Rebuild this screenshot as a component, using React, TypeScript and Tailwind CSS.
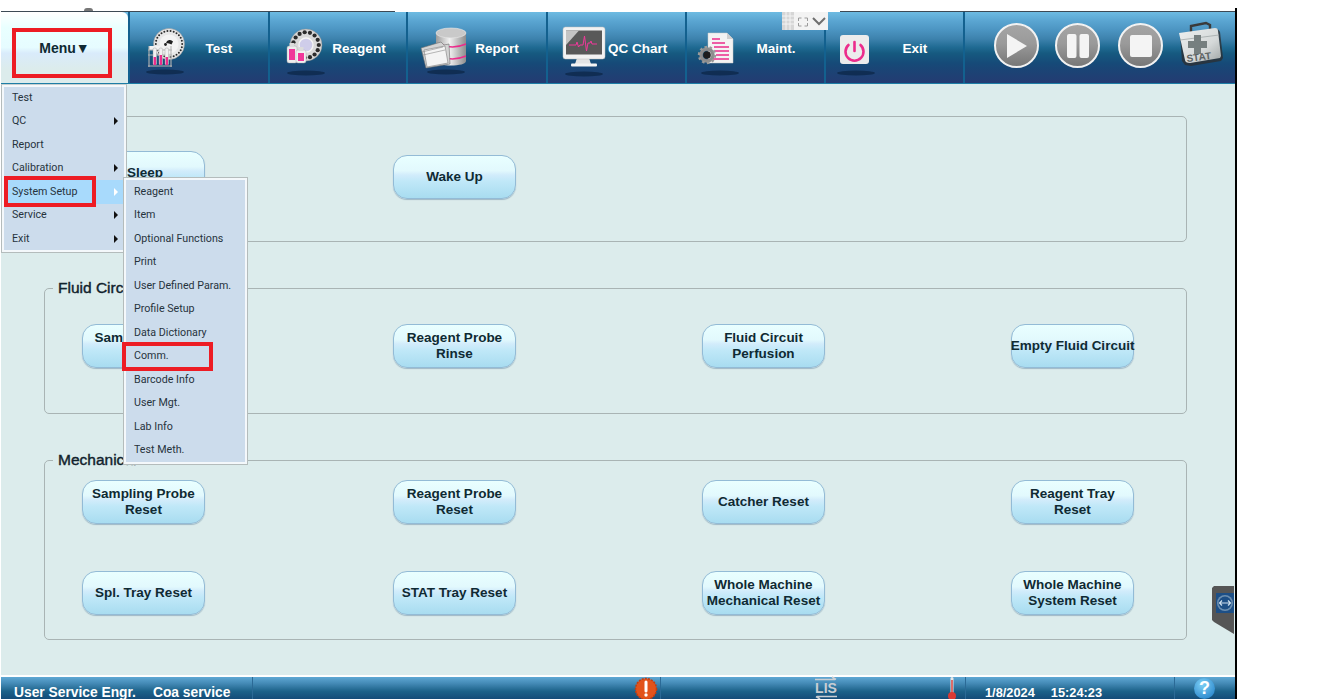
import { ReactNode } from 'react'

const shadow = (cx: number, cy = 60) => <ellipse cx={cx} cy={cy} rx="19" ry="2.5" fill="#0c2748" opacity="0.75" />

function Dots({ cx, cy, r, n, size }: { cx: number; cy: number; r: number; n: number; size: number }) {
  return (
    <>
      {Array.from({ length: n }).map((_, i) => (
        <circle
          key={i}
          cx={cx + r * Math.cos((i * 2 * Math.PI) / n)}
          cy={cy + r * Math.sin((i * 2 * Math.PI) / n)}
          r={size}
          fill="#2b2b2b"
        />
      ))}
    </>
  )
}

function TestIcon() {
  return (
    <svg className="-ml-[2px] shrink-0" width="62" height="72" viewBox="0 0 62 72">
      {shadow(37, 60)}
      <circle cx="41" cy="32" r="15.5" fill="#e8e8e8" stroke="#9a9a9a" strokeWidth="0.6" />
      <Dots cx={41} cy={32} r={13.2} n={26} size={1} />
      <circle cx="41" cy="32" r="9.5" fill="#f4f4f4" />
      <path d="M38 31a4 4 0 0 1 7-1.5l-1.5 3-2.5-1z" fill="#222" />
      <circle cx="37.5" cy="32.5" r="1.4" fill="#222" />
      <path d="M21 34h23l-1 4H21z" fill="#f2f2f2" />
      <g stroke="#b4b4b4" strokeWidth="1.1" fill="none">
        <path d="M20 38h24M20 43h24M20 54h24M21 34v21M43 34v21" />
      </g>
      <g>
        <rect x="25" y="36" width="3.6" height="17" rx="1.5" fill="#f1f1f1" stroke="#999" strokeWidth="0.4" />
        <rect x="31" y="36" width="3.6" height="17" rx="1.5" fill="#f1f1f1" stroke="#999" strokeWidth="0.4" />
        <rect x="37" y="36" width="3.6" height="17" rx="1.5" fill="#f1f1f1" stroke="#999" strokeWidth="0.4" />
        <rect x="25.6" y="45" width="2.4" height="8" fill="#ec2c8c" />
        <rect x="31.6" y="43" width="2.4" height="10" fill="#ec2c8c" />
        <rect x="37.6" y="45" width="2.4" height="8" fill="#ec2c8c" />
      </g>
    </svg>
  )
}

function ReagentIcon() {
  return (
    <svg className="-ml-[2px] shrink-0" width="62" height="72" viewBox="0 0 62 72">
      {shadow(38, 61)}
      <circle cx="38" cy="33" r="16" fill="#d9d9d9" stroke="#8d8d8d" strokeWidth="0.5" />
      <Dots cx={38} cy={33} r={12.8} n={15} size={2.1} />
      <circle cx="38" cy="33" r="7" fill="#cfcdea" stroke="#f5f5f5" strokeWidth="1.4" />
      <rect x="19" y="34" width="10" height="17" rx="2" fill="#ededed" stroke="#aaa" strokeWidth="0.4" />
      <rect x="21.5" y="31" width="5" height="4" fill="#dcdcdc" />
      <rect x="21" y="37" width="6" height="11" fill="#f0389a" />
      <rect x="28" y="38" width="10" height="13" rx="2" fill="#f0f0f0" stroke="#aaa" strokeWidth="0.4" />
      <rect x="30.5" y="35" width="5" height="4" fill="#dcdcdc" />
      <rect x="30" y="41" width="6" height="8" fill="#f0389a" />
    </svg>
  )
}

function ReportIcon() {
  return (
    <svg className="-ml-[2px] shrink-0" width="62" height="72" viewBox="0 0 62 72">
      <defs>
        <linearGradient id="cyl" x1="0" x2="1" y1="0" y2="0">
          <stop offset="0" stopColor="#9c9c9c" />
          <stop offset="0.45" stopColor="#f1f1f1" />
          <stop offset="1" stopColor="#8d8d8d" />
        </linearGradient>
      </defs>
      {shadow(40, 60)}
      <path d="M30 21v28c0 3 7 4.5 15 4.5s15-1.5 15-4.5V21z" fill="url(#cyl)" />
      <ellipse cx="45" cy="21" rx="15" ry="5" fill="#c9c9c9" stroke="#e9e9e9" strokeWidth="0.6" />
      <path d="M36 33c8 3 17 2 24-1M36 45c8 3 17 2 24-1" stroke="#ec2c8c" strokeWidth="1.4" fill="none" />
      <path d="M15 36l20-6 3 3 5-1 1 20-24 4z" fill="#d4d4d4" stroke="#6b6b6b" strokeWidth="0.6" />
      <path d="M18 38l21-4 3 17-21 4z" fill="#f4f4f4" stroke="#7d7d7d" strokeWidth="0.6" />
      <path d="M16 40l21-5M17 43l22-5" stroke="#8a8a8a" strokeWidth="0.6" />
    </svg>
  )
}

function QcIcon() {
  return (
    <svg className="-ml-[2px] shrink-0" width="62" height="72" viewBox="0 0 62 72">
      {shadow(38, 62)}
      <path d="M31 46h12l2 6H29z" fill="#e4e4e4" />
      <rect x="25" y="51.5" width="26" height="3" rx="1" fill="#f4f4f4" />
      <rect x="17" y="15" width="42" height="32" rx="2.5" fill="#f2f2f2" stroke="#bdbdbd" strokeWidth="0.5" />
      <rect x="20" y="18.5" width="36" height="24" fill="#595959" />
      <path d="M20 18.5h13L20 33z" fill="#c4c4c4" />
      <path
        d="M23 33h7l1-3 1.500 5 1.500-2h3l1.500-9 2 15 1.500-8h2l1-2 1 3h5"
        stroke="#f0389a"
        strokeWidth="1"
        fill="none"
      />
    </svg>
  )
}

function MaintIcon() {
  return (
    <svg className="-ml-[2px] shrink-0" width="62" height="72" viewBox="0 0 62 72">
      {shadow(35, 61)}
      <path d="M23 21h19l6 6v24H23z" fill="#f3f3f3" stroke="#c9c9c9" strokeWidth="0.5" />
      <path d="M42 21v6h6z" fill="#cfcfcf" />
      <path d="M27 27h8M27 31h13M29 35h15M30 39h14M31 43h13M28 47h16" stroke="#ec2c8c" strokeWidth="1.400" />
      <circle cx="22" cy="43" r="6" fill="none" stroke="#8c8c8c" strokeWidth="3.400" />
      <circle cx="22" cy="43" r="8" fill="none" stroke="#9a9a9a" strokeWidth="2.400" strokeDasharray="2.600 2.400" />
      <circle cx="22" cy="43" r="3.800" fill="#1d1d1d" />
    </svg>
  )
}

function ExitIcon() {
  return (
    <svg className="-ml-[2px] shrink-0" width="62" height="72" viewBox="0 0 62 72">
      {shadow(32, 61)}
      <rect x="16" y="23" width="29" height="29" rx="3" fill="#ececec" />
      <path d="M24.500 33a9 9 0 1 0 12 0" fill="none" stroke="#ec2c8c" strokeWidth="2.600" strokeLinecap="round" />
      <path d="M30.500 30v9" stroke="#ec2c8c" strokeWidth="2.600" strokeLinecap="round" />
    </svg>
  )
}

function StatIcon() {
  return (
    <svg width="46" height="48" viewBox="0 0 46 48">
      <defs>
        <linearGradient id="statBody" x1="0" x2="1" y1="0" y2="1">
          <stop offset="0" stopColor="#eef0f0" />
          <stop offset="0.6" stopColor="#d5d9d9" />
          <stop offset="1" stopColor="#9ea4a4" />
        </linearGradient>
      </defs>
      <path d="M13 12V6l15-3 4 2v6" fill="none" stroke="#3a3a3a" strokeWidth="2.400" />
      <path d="M2 14l36-5c2 0 3 1 4 3l3 26-2 3-30 5-6-1-3-4z" fill="#2c2f33" opacity="0.8" />
      <path d="M1 13l36-5c2 0 3 1 3 3l3 25-1 2-30 5c-3 0-5-1-5-3z" fill="url(#statBody)" />
      <path d="M2 20l39-5" stroke="#a2aaaa" strokeWidth="0.8" />
      <path d="M16 15h7v6h6v7h-6v6h-7v-6h-6v-7h6z" fill="#767f7f" />
      <text
        x="9"
        y="42"
        fontSize="10"
        fontWeight="700"
        fill="#5c6262"
        fontFamily="Liberation Sans, sans-serif"
        transform="rotate(-7 9 42)"
      >
        STAT
      </text>
    </svg>
  )
}

function Tab({ width, icon, label }: { width: string; icon: ReactNode; label: string }) {
  return (
    <div className={`flex shrink-0 items-start border-l-2 border-[#13618f] ${width}`}>
      {icon}
      <span className="mt-[28px] w-[58px] text-center text-[13.5px] leading-[18px] font-bold whitespace-nowrap text-white">
        {label}
      </span>
    </div>
  )
}

function RoundButton({ className, children }: { className: string; children: ReactNode }) {
  return (
    <div
      className={`flex h-[45px] w-[45px] shrink-0 items-center justify-center rounded-full border-2 border-[#f2f2f2] bg-[linear-gradient(180deg,#a5a5a5_0%,#9a9a9a_45%,#777777_100%)] ${className}`}
    >
      {children}
    </div>
  )
}

function Btn({ children, className = '' }: { children: ReactNode; className?: string }) {
  return (
    <div
      className={`flex h-[44px] w-[123px] items-center justify-center rounded-[14px] border border-[#93bbd6] bg-[linear-gradient(180deg,#e9ffff_0%,#e2f9fd_35%,#d2ecfb_45%,#c0e8f8_60%,#a8dcf0_100%)] text-center text-[13.5px] leading-[16px] font-bold whitespace-nowrap text-[#0f2a33] shadow-[0_1px_1px_#9fb9c6] ${className}`}
    >
      <span>{children}</span>
    </div>
  )
}

function Group({ legend, className, children }: { legend?: string; className: string; children: ReactNode }) {
  return (
    <div className={`relative w-[1143px] rounded-[5px] border border-[#a9b4b4] pl-[37px] ${className}`}>
      {legend && (
        <span className="absolute -top-[10px] left-[8px] bg-[#dcecec] px-[5px] text-[15.5px] leading-[18px] text-[#10222c] [-webkit-text-stroke:0.4px_#10222c]">
          {legend}
        </span>
      )}
      {children}
    </div>
  )
}

const rowGrid = 'grid grid-cols-[311px_309px_309px_123px]'

function MenuRow({ label, arrow, active }: { label: string; arrow?: boolean; active?: boolean }) {
  return (
    <div
      className={`flex h-[23.5px] items-center justify-between pr-[6px] pl-[8px] ${active ? 'bg-[#a8dafc]' : ''}`}
    >
      <span>{label}</span>
      {arrow && <span className={`h-0 w-0 border-y-[4px] border-l-[4px] border-y-transparent ${active ? 'border-l-white' : 'border-l-[#111]'}`} />}
    </div>
  )
}

const subItems = [
  'Reagent',
  'Item',
  'Optional Functions',
  'Print',
  'User Defined Param.',
  'Profile Setup',
  'Data Dictionary',
  'Comm.',
  'Barcode Info',
  'User Mgt.',
  'Lab Info',
  'Test Meth.',
]

export default function App() {
  return (
    <div className="relative flex h-[699px] w-[1319px] overflow-hidden bg-white font-['Liberation_Sans',Arial,sans-serif]">
      <div className="flex w-[1235px] flex-col pt-[11px] pl-px">
        <div className="flex h-px shrink-0">
          <div className="w-[394px] bg-[#3d4a55]" />
          <div className="w-[445px]" />
          <div className="flex-1 bg-[#3d4a55]" />
        </div>

        {/* Top bar */}
        <div className="flex h-[72px] w-[1234px] shrink-0 border-b border-[#1d7ea6] bg-[linear-gradient(180deg,#6dbbe2_0%,#5ba6d2_12%,#4c95c2_25%,#3d82ad_38%,#1f6a92_50%,#165a80_58%,#164a78_72%,#1b4475_82%,#243b72_100%)]">
          <div className="flex w-[127px] shrink-0 items-center justify-center rounded-tr-[6px] bg-[linear-gradient(180deg,#ffffff_0%,#e9ffff_22%,#e6fcff_50%,#d9ebfb_58%,#dcecec_80%,#dcecec_100%)] pt-[2px] text-[14px] font-bold text-[#0f2a33]">
            Menu▼
          </div>
          <Tab width="w-[140px]" icon={<TestIcon />} label="Test" />
          <Tab width="w-[138px]" icon={<ReagentIcon />} label="Reagent" />
          <Tab width="w-[140px]" icon={<ReportIcon />} label="Report" />
          <Tab width="w-[139px]" icon={<QcIcon />} label="QC Chart" />
          <Tab width="w-[139px]" icon={<MaintIcon />} label="Maint." />
          <Tab width="w-[139px]" icon={<ExitIcon />} label="Exit" />
          <div className="flex flex-1 items-start border-l-2 border-[#13618f] pt-[11px] pl-[29px]">
            <RoundButton className="">
              <svg width="22" height="26" viewBox="0 0 22 26">
                <path d="M1 1l20 12L1 25z" fill="#f4f4f4" />
              </svg>
            </RoundButton>
            <RoundButton className="ml-[16px]">
              <svg width="22" height="24" viewBox="0 0 22 24">
                <rect x="0" y="0" width="9.500" height="24" rx="2" fill="#f4f4f4" />
                <rect x="12.500" y="0" width="9.500" height="24" rx="2" fill="#f4f4f4" />
              </svg>
            </RoundButton>
            <RoundButton className="ml-[18px]">
              <svg width="22" height="22" viewBox="0 0 22 22">
                <rect width="22" height="22" rx="2" fill="#f4f4f4" />
              </svg>
            </RoundButton>
            <div className="-mt-[3px] ml-[15px]">
              <StatIcon />
            </div>
          </div>
        </div>

        {/* Work area */}
        <div className="flex w-[1234px] flex-1 flex-col bg-[#dcecec] pt-[32px] pl-[43px]">
          <Group className="h-[126px] pt-[38px]">
            <div className={rowGrid}>
              <Btn className="-mt-[4px] pl-[3px]">Sleep</Btn>
              <Btn>Wake Up</Btn>
            </div>
          </Group>
          <Group legend="Fluid Circuit" className="mt-[46px] h-[126px] pt-[35px]">
            <div className={rowGrid}>
              <Btn className="pl-[5px]">
                Sampling Probe
                <br />
                Rinse
              </Btn>
              <Btn>
                Reagent Probe
                <br />
                Rinse
              </Btn>
              <Btn>
                Fluid Circuit
                <br />
                Perfusion
              </Btn>
              <Btn>Empty Fluid Circuit</Btn>
            </div>
          </Group>
          <Group legend="Mechanical" className="mt-[46px] h-[180px] pt-[19px]">
            <div className={`${rowGrid} gap-y-[47px]`}>
              <Btn>
                Sampling Probe
                <br />
                Reset
              </Btn>
              <Btn>
                Reagent Probe
                <br />
                Reset
              </Btn>
              <Btn>Catcher Reset</Btn>
              <Btn>
                Reagent Tray
                <br />
                Reset
              </Btn>
              <Btn>Spl. Tray Reset</Btn>
              <Btn>STAT Tray Reset</Btn>
              <Btn>
                Whole Machine
                <br />
                Mechanical Reset
              </Btn>
              <Btn>
                Whole Machine
                <br />
                System Reset
              </Btn>
            </div>
          </Group>
        </div>

        {/* Status bar */}
        <div className="flex h-[24px] w-[1234px] shrink-0 items-center border-t-2 border-white bg-[linear-gradient(180deg,#5fa8d4_0%,#4389b5_30%,#1c6289_65%,#144c78_100%)] text-[13.8px] leading-[12px] font-bold text-white">
          <div className="flex h-full w-[252px] items-end border-r border-[#2b6a96] pl-[13px]">
            <span>User Service Engr.</span>
            <span className="ml-[17px]">Coa service</span>
          </div>
          <div className="flex h-full w-[408px] items-center justify-end border-r border-[#2b6a96] pr-[2px]">
            <svg width="24" height="22" viewBox="0 0 24 22">
              <circle cx="12" cy="12" r="10.500" fill="#e2531b" stroke="#c43d10" strokeWidth="1.500" strokeDasharray="2 1.200" />
              <path d="M12 5v9" stroke="#fff" strokeWidth="3" strokeLinecap="round" />
              <circle cx="12" cy="18" r="1.700" fill="#fff" />
            </svg>
          </div>
          <div className="flex h-full w-[305px] items-center border-r border-[#2b6a96] pl-[153px]">
            <span className="relative w-[24px] text-center text-[14px] leading-[14px] text-[#c9ced3]">
              <svg className="absolute -top-[5px] left-0" width="24" height="5" viewBox="0 0 24 5">
                <path d="M1 3.500h20M18 1l4 2.500" stroke="#c9ced3" strokeWidth="1.600" fill="none" />
              </svg>
              LIS
              <svg className="absolute -bottom-[5px] left-0" width="24" height="5" viewBox="0 0 24 5">
                <path d="M3 1.500h20M6 4L2 1.500" stroke="#c9ced3" strokeWidth="1.600" fill="none" />
              </svg>
            </span>
            <svg className="ml-[109px]" width="10" height="22" viewBox="0 0 10 22">
              <rect x="3.500" y="0" width="3" height="18" rx="1.500" fill="#e8e8e8" />
              <rect x="4.300" y="3" width="1.400" height="15" fill="#d93a35" />
              <circle cx="5" cy="19" r="4" fill="#d93a35" />
            </svg>
          </div>
          <div className="flex h-full w-[209px] items-end border-r border-[#2b6a96] pl-[19px] text-[12.8px]">
            <span>1/8/2024</span>
            <span className="ml-[16px]">15:24:23</span>
          </div>
          <div className="flex h-full flex-1 items-center pl-[19px]">
            <div className="flex h-[21px] w-[21px] items-center justify-center rounded-full bg-[radial-gradient(circle_at_40%_30%,#7fd0f5,#1878c4)] text-[18px] leading-none text-white">
              ?
            </div>
          </div>
        </div>
      </div>

      <div className="mt-[8px] h-[691px] w-[2px] shrink-0 bg-black" />

      {/* Speck above the menu tab */}
      <div className="absolute top-[8px] left-[84px] h-[3px] w-[9px] rounded-t-full bg-[#777777]" />

      {/* Menus */}
      <div className="absolute top-[84px] left-[1px] w-[126px] border border-[#b4bcbc] border-t-[#c8cfcf] bg-[#ccdcec] pt-[1px] font-['Roboto',sans-serif] text-[10.7px] text-[#27333d] shadow-[inset_0_0_0_2px_#f4f8fb]">
        <div className="pr-[2px] pl-[2px]">
          <MenuRow label="Test" />
          <MenuRow label="QC" arrow />
          <MenuRow label="Report" />
          <MenuRow label="Calibration" arrow />
          <MenuRow label="System Setup" arrow active />
          <MenuRow label="Service" arrow />
          <MenuRow label="Exit" arrow />
        </div>
        <div className="h-[1px]" />
      </div>
      <div className="absolute top-[177px] left-[123px] w-[125px] border border-[#b4bcbc] bg-[#ccdcec] pt-[2px] pb-[2px] pl-[2px] font-['Roboto',sans-serif] text-[10.7px] text-[#27333d] shadow-[inset_0_0_0_2px_#f4f8fb]">
        {subItems.map((s) => (
          <MenuRow key={s} label={s} />
        ))}
      </div>

      {/* Red annotation boxes */}
      <div className="absolute top-[28px] left-[12px] h-[50px] w-[100px] border-[4px] border-[#ed1c24]" />
      <div className="absolute top-[176px] left-[4px] h-[31px] w-[92px] border-[4px] border-[#ed1c24]" />
      <div className="absolute top-[342px] left-[122px] h-[29px] w-[91px] border-[4px] border-[#ed1c24]" />

      {/* Small window toolbar */}
      <div className="absolute top-[12px] left-[782px] flex h-[18px] w-[46px] items-center bg-[#f3f3f3]">
        <svg width="46" height="18" viewBox="0 0 46 18">
          <rect x="0" y="0" width="12" height="18" fill="#d6d6d6" />
          <path d="M0 4h12M0 8h12M0 12h12M4 0v18M8 0v18" stroke="#f3f3f3" strokeWidth="1" />
          <path d="M16.500 9V6h3M22.500 6h3v3M25.500 11v3h-3M19.500 14h-3v-3" stroke="#9a9a9a" fill="none" strokeWidth="1" />
          <path d="M31 6l6 6 6-6" stroke="#6f6f6f" fill="none" strokeWidth="2" />
        </svg>
      </div>

      {/* Remote session tab */}
      <div className="absolute top-[586px] left-[1212px]">
        <svg width="22" height="48" viewBox="0 0 22 48">
          <path d="M2 0h20v48L2 36 0 34V2z" fill="#555555" />
          <rect x="4" y="7" width="18" height="20" fill="#1d4f86" />
          <circle cx="13" cy="17" r="8" fill="#6d8fb0" />
          <circle cx="13" cy="17" r="6.500" fill="#1d4f86" />
          <path d="M7.500 17h11M10 14.500L7.500 17l2.500 2.500M16 14.500L18.500 17 16 19.500" stroke="#cfe0ee" strokeWidth="1.200" fill="none" />
        </svg>
      </div>
    </div>
  )
}
